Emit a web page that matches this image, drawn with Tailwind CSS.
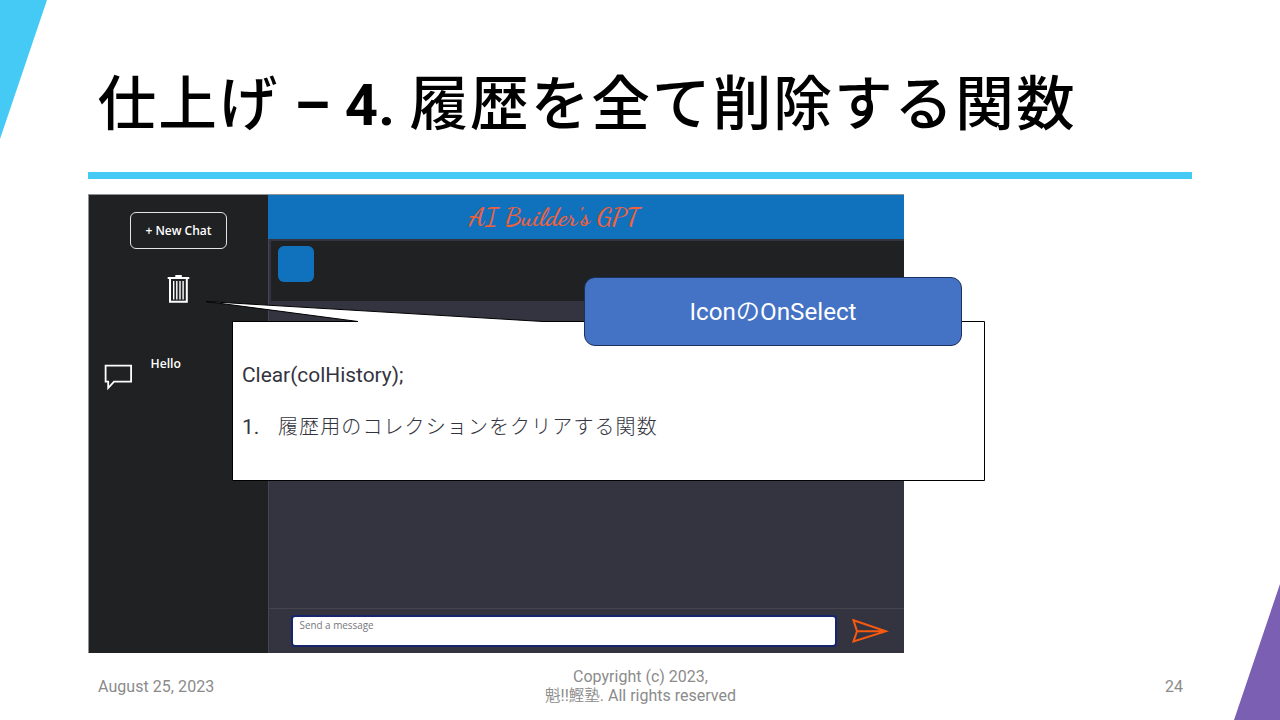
<!DOCTYPE html>
<html lang="ja">
<head>
<meta charset="utf-8">
<title>仕上げ – 4. 履歴を全て削除する関数</title>
<script src="https://cdn.jsdelivr.net/npm/@tailwindcss/browser@4"></script>
</head>
<body class="bg-white">
<main class="relative flex h-[720px] w-[1280px] flex-col overflow-hidden bg-white px-[88px] font-[Roboto,'Noto_Sans_CJK_JP',sans-serif]">
  <svg class="absolute left-0 top-0" width="48" height="140" viewBox="0 0 48 140"><path d="M0 0H47L0 139Z" fill="#45caf5"/></svg>
  <svg class="absolute bottom-0 right-0" width="48" height="138" viewBox="0 0 48 138"><path d="M48 2V138H2Z" fill="#7a5fb3"/></svg>

  <h1 class="flex h-[172px] items-baseline whitespace-pre pl-[9.5px] pt-[71px] text-[58px] font-bold leading-none text-black"><span class="font-['Noto_Sans_CJK_JP',sans-serif] text-[58.67px] font-medium leading-none tracking-[2px]">仕上げ</span><span> – 4. </span><span class="font-['Noto_Sans_CJK_JP',sans-serif] text-[58.67px] font-medium leading-none tracking-[2px]">履歴を全て削除する関数</span></h1>
  <div class="h-[7px] shrink-0 bg-[#45caf5]"></div>

  <section class="relative mt-[15px] h-[459px] shrink-0">
    <div class="flex h-full w-[816px] border-l border-t border-[#8f9192] bg-[#343440] font-['Open_Sans',sans-serif]">
      <aside class="flex w-[179px] shrink-0 flex-col bg-[#202123] text-white">
        <div class="ml-[41px] mt-[17px] flex h-[37px] w-[97px] items-center justify-center rounded-[6px] border-[1.5px] border-[#e4e4e4] text-[12px] font-semibold">+ New Chat</div>
        <svg class="ml-[78px] mt-[24.5px]" width="24" height="30" viewBox="0 0 24 30" fill="none" stroke="#fff"><path d="M0.7 4H22.3" stroke-width="2"/><path d="M8.3 2H14.8" stroke-width="2"/><path d="M3 4V27.8H19.8V4" stroke-width="2"/><path d="M6.7 7V25.5M9.8 7V25.5M13 7V25.5M16.1 7V25.5" stroke-width="1.4"/></svg>
        <div class="mt-[51.5px] flex w-full gap-[17.5px] pl-[15px]">
          <svg class="mt-[8px]" width="29" height="27" viewBox="0 0 29 27" fill="none" stroke="#fff" stroke-width="1.8"><path d="M1.6 2.6H27.1V18.7H10L4.2 25V18.7H1.6Z"/></svg>
          <span class="text-[12.2px] font-semibold leading-[18px]">Hello</span>
        </div>
      </aside>
      <div class="flex flex-1 flex-col">
        <header class="flex h-[44px] items-center justify-center bg-[#1071bd] pr-[63px] font-['Dancing_Script','Lato',cursive] text-[26.4px] font-semibold leading-none text-[#f2603a]"><span class="whitespace-nowrap">AI Builder's GPT</span></header>
        <div class="flex flex-1 flex-col border-l border-[#454552]">
          <div class="ml-[2px] mt-[2px] h-[60px] bg-[#202123] pl-[7px] pt-[4.5px]"><div class="size-[36px] rounded-[6px] bg-[#1071bd]"></div></div>
          <div class="flex-1"></div>
          <footer class="flex h-[45px] border-t border-[#44444f] pl-[22px] pt-[6px]">
            <div class="h-[32px] w-[546px] rounded-[4px] border-2 border-[#17256f] bg-white pl-[6.5px] pt-[1px] text-[9.9px] leading-[15px] text-[#77777b]">Send a message</div>
            <svg class="ml-[14px] mt-[3px]" width="38" height="26" viewBox="0 0 38 26" fill="none" stroke="#f9590f" stroke-width="2"><path d="M2.5 2.3L35 13.2L2.5 23.5L6 13.2ZM6 13.2H35"/></svg>
          </footer>
        </div>
      </div>
    </div>

    <svg class="absolute left-[112px] top-[104px]" width="786" height="184" viewBox="200 298 786 184"><path d="M232.5 321.5H358L206 301.5L543 321.5H984.5V480.5H232.5Z" fill="#fff" stroke="#000"/></svg>
    <div class="absolute left-[154px] top-[169px] flex flex-col gap-[28px] text-[20.9px] leading-[24px] text-[#343440]">
      <p>Clear(colHistory);</p>
      <p class="flex items-baseline"><span class="w-[36px]">1.</span><span class="text-[20px] font-light tracking-[1.1px]">履歴用のコレクションをクリアする関数</span></p>
    </div>
    <div class="absolute left-[496px] top-[83px] flex h-[69px] w-[378px] items-center justify-center rounded-[11px] border border-[#1c315e] bg-[#4472c4] text-[24.2px] text-white"><span>Icon<span class="font-['Noto_Sans_CJK_JP',sans-serif] font-[350]">の</span>OnSelect</span></div>
  </section>

  <footer class="flex flex-1 items-center justify-between px-[10px] text-[16px] leading-[19px] text-[#8b8b8b]">
    <span class="w-[240px] tracking-[0.05px]">August 25, 2023</span>
    <p class="-mt-[2px] text-center">Copyright (c) 2023,<br><span class="text-[15.5px] font-[350] leading-none">魁</span>!!<span class="text-[15.5px] font-[350] leading-none">鰹塾</span>. All rights reserved</p>
    <span class="-mr-px w-[240px] text-right">24</span>
  </footer>
</main>
</body>
</html>
